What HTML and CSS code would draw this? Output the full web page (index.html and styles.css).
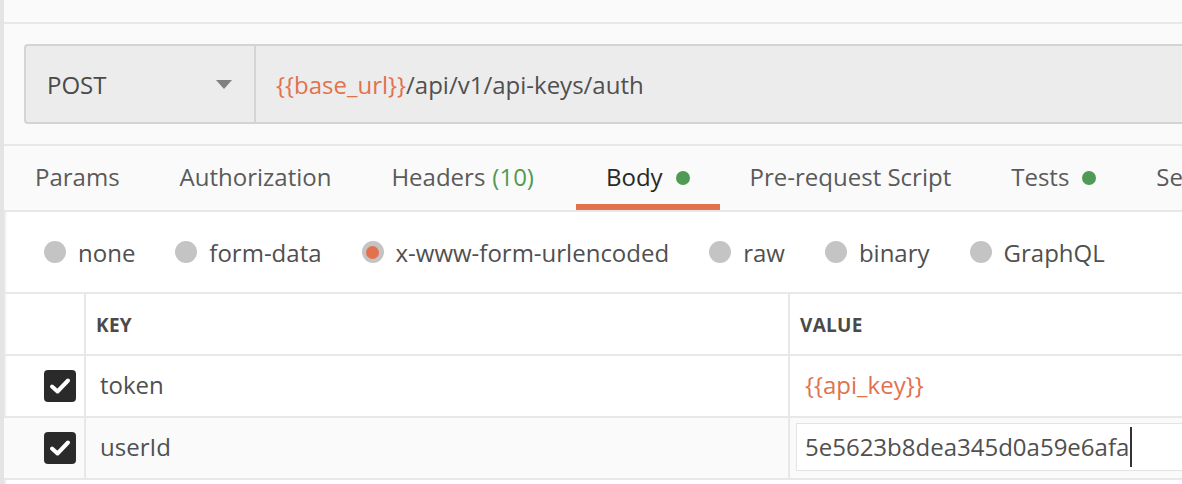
FILE: index.html
```html
<!DOCTYPE html>
<html>
<head>
<meta charset="utf-8">
<link rel="stylesheet" href="styles.css">
</head>
<body>
<div class="app">
  <div class="topstrip"></div>
  <div class="urlarea">
    <div class="urlbox">
      <div class="method">
        <span>POST</span>
        <svg class="caret" width="16" height="10" viewBox="0 0 16 10"><path d="M0 0 L16 0 L8 9 Z" fill="#808080"/></svg>
      </div>
      <div class="url"><span class="var">{{base_url}}</span>/api/v1/api-keys/auth</div>
    </div>
  </div>
  <div class="tabs">
    <div class="tab">Params</div>
    <div class="tab">Authorization</div>
    <div class="tab wide">Headers <span class="count">(10)</span></div>
    <div class="tab active">Body <span class="dot"></span></div>
    <div class="tab">Pre-request Script</div>
    <div class="tab">Tests <span class="dot"></span></div>
    <div class="tab">Settings</div>
  </div>
  <div class="radios">
    <div class="radio"><span class="circle"></span>none</div>
    <div class="radio"><span class="circle"></span>form-data</div>
    <div class="radio"><span class="circle on"></span>x-www-form-urlencoded</div>
    <div class="radio"><span class="circle"></span>raw</div>
    <div class="radio"><span class="circle"></span>binary</div>
    <div class="radio"><span class="circle"></span>GraphQL</div>
  </div>
  <div class="table">
    <div class="row head">
      <div class="c0"></div>
      <div class="c1">KEY</div>
      <div class="c2">VALUE</div>
    </div>
    <div class="row">
      <div class="c0"><span class="check"><svg width="22" height="18" viewBox="0 0 22 18"><path d="M3 9.5 L8.5 14.5 L19 3.5" fill="none" stroke="#fff" stroke-width="4" stroke-linecap="round" stroke-linejoin="round"/></svg></span></div>
      <div class="c1">token</div>
      <div class="c2"><span class="var">{{api_key}}</span></div>
    </div>
    <div class="row alt">
      <div class="c0"><span class="check"><svg width="22" height="18" viewBox="0 0 22 18"><path d="M3 9.5 L8.5 14.5 L19 3.5" fill="none" stroke="#fff" stroke-width="4" stroke-linecap="round" stroke-linejoin="round"/></svg></span></div>
      <div class="c1">userId</div>
      <div class="c2 editing"><div class="input">5e5623b8dea345d0a59e6afa<span class="cursor"></span></div></div>
    </div>
  </div>
</div>
</body>
</html>
```
FILE: styles.css
```css
* { box-sizing: border-box; }
html, body { margin: 0; padding: 0; }
body {
  width: 1182px;
  height: 484px;
  overflow: hidden;
  background: #fff;
  font-family: "Open Sans", "Noto Sans", sans-serif;
  color: #505050;
}
.app {
  height: 484px;
  border-left: 4px solid #e4e4e4;
  box-shadow: inset 3px 0 3px -2px #ddd;
  overflow: hidden;
}
.topstrip {
  height: 24px;
  background: #fafafa;
  border-bottom: 2px solid #e8e8e8;
}
.urlarea {
  background: #fafafa;
  padding: 20px 0 20px 20px;
  border-bottom: 2px solid #e8e8e8;
}
.urlbox {
  display: flex;
  height: 80px;
  background: #ececec;
  border: 2px solid #d4d4d4;
  border-right: none;
  border-radius: 4px 0 0 4px;
  font-size: 24px;
}
.method {
  width: 230px;
  display: flex;
  align-items: center;
  justify-content: space-between;
  padding: 0 22px 0 21px;
  border-right: 2px solid #d4d4d4;
  color: #4a4a4a;
}
.caret { margin-top: 2px; }
.url {
  display: flex;
  align-items: center;
  padding-left: 20px;
  color: #505050;
}
.var { color: #e2714e; }
.tabs {
  display: flex;
  height: 66px;
  background: #fafafa;
  border-bottom: 2px solid #e8e8e8;
  padding-left: 1px;
  white-space: nowrap;
  font-size: 24px;
  overflow: hidden;
}
.tab {
  display: flex;
  align-items: center;
  padding: 3px 30px 0;
  height: 64px;
  border-bottom: 6px solid transparent;
  color: #5a5a5a;
  flex: none;
}
.tab.wide { padding-right: 42px; }
.tab.active {
  border-bottom-color: #e2714e;
  color: #282828;
}
.count { color: #4f9a55; margin-left: 7px; }
.dot {
  width: 14px;
  height: 14px;
  border-radius: 50%;
  background: #4f9a55;
  margin-left: 13px;
  margin-top: 2px;
}
.radios {
  display: flex;
  align-items: center;
  height: 82px;
  padding-left: 40px;
  border-bottom: 2px solid #e8e8e8;
  font-size: 24px;
  color: #505050;
}
.radio {
  display: flex;
  align-items: center;
  margin-right: 40px;
}
.circle {
  width: 22px;
  height: 22px;
  border-radius: 50%;
  background: #c4c4c4;
  margin-right: 12px;
  display: flex;
  align-items: center;
  justify-content: center;
}
.circle.on::after {
  content: "";
  width: 13px;
  height: 13px;
  border-radius: 50%;
  background: #e2714e;
}
.row {
  display: flex;
  height: 62px;
  border-bottom: 2px solid #e8e8e8;
}
.row.alt { background: #fafafa; }
.c0 {
  width: 82px;
  flex: none;
  border-right: 2px solid #e8e8e8;
  display: flex;
  align-items: center;
  justify-content: flex-end;
  padding-right: 8px;
}
.c1 {
  width: 704px;
  flex: none;
  border-right: 2px solid #e8e8e8;
  display: flex;
  align-items: center;
  padding-left: 14px;
  padding-bottom: 3px;
  font-size: 24px;
}
.c2 {
  flex: 1;
  display: flex;
  align-items: center;
  padding-left: 15px;
  padding-bottom: 3px;
  font-size: 24px;
}
.head .c1, .head .c2 {
  font-size: 19px;
  font-weight: 700;
  color: #4a4a4a;
  padding-top: 2px;
  padding-bottom: 0;
  letter-spacing: 0.3px;
}
.head .c1 { padding-left: 10px; }
.head .c2 { padding-left: 10px; }
.check {
  width: 32px;
  height: 32px;
  border-radius: 4px;
  background: #2a2a2a;
  display: flex;
  align-items: center;
  justify-content: center;
}
.c2.editing { padding: 5px 0 7px 6px; background: #fafafa; }
.input {
  height: 48px;
  width: 100%;
  background: #fff;
  border: 1px solid #e4e4e4;
  border-right: none;
  display: flex;
  align-items: center;
  padding-left: 8px;
  padding-bottom: 2px;
}
.cursor {
  width: 2px;
  height: 40px;
  background: #333;
  margin-left: 1px;
  margin-top: 2px;
}
```
